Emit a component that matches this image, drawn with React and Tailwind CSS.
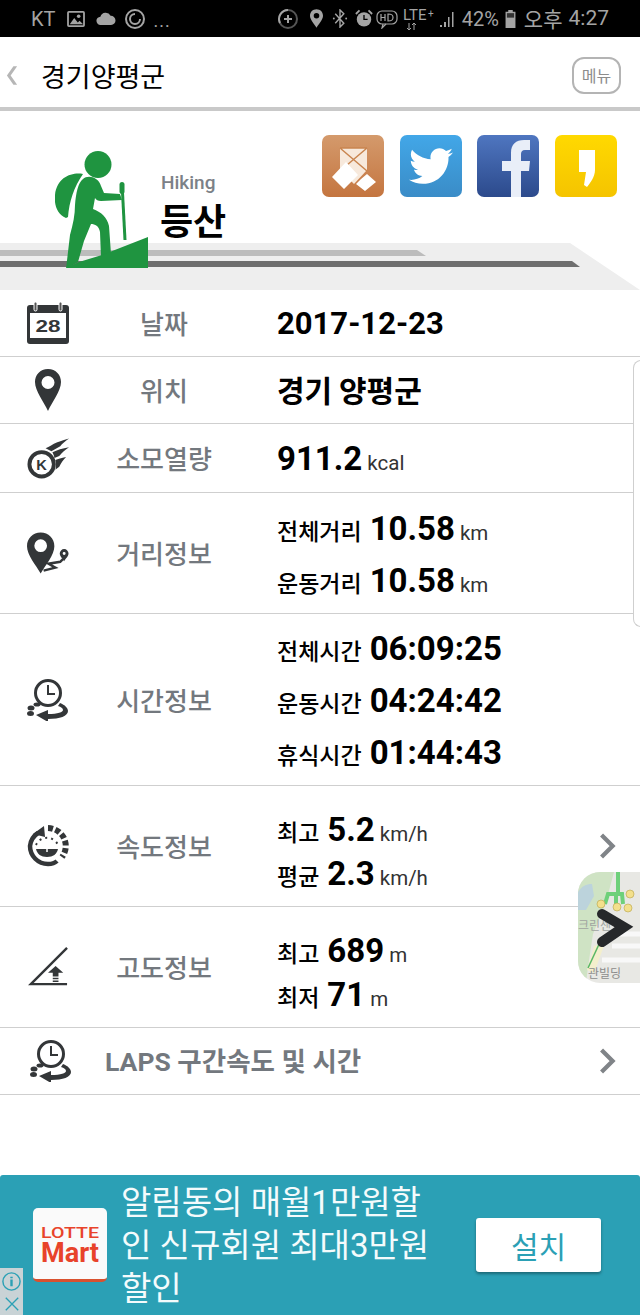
import { FaTwitter } from 'react-icons/fa'

const KR = { fontFamily: '"Noto Sans CJK KR", sans-serif' }
const RB = { fontFamily: 'Roboto, sans-serif' }

const CalendarIcon = () => (
  <svg viewBox="0 0 42 42" className="w-[42px] h-[42px]" fill="#333638">
    <rect x="0" y="3" width="42" height="39" rx="3" />
    <rect x="3" y="11" width="36" height="25" fill="#fff" />
    <rect x="7" y="0" width="3" height="9" rx="1.500" fill="#555" stroke="#fff" strokeWidth="1" />
    <rect x="32" y="0" width="3" height="9" rx="1.500" fill="#555" stroke="#fff" strokeWidth="1" />
    <text x="8.500" y="30" textLength="25" lengthAdjust="spacingAndGlyphs" fontFamily="Liberation Sans, sans-serif" fontWeight="700" fontSize="16">28</text>
  </svg>
)

const PinIcon = () => (
  <svg viewBox="0 0 28 42" className="w-[28px] h-[42px]">
    <path fillRule="evenodd" fill="#333638" d="M14 0C6 0 1 6 1 13c0 9 9 20 13 29 4-9 13-20 13-29C27 6 22 0 14 0zm0 7a6.500 6.500 0 1 1 0 13 6.500 6.500 0 0 1 0-13z" />
  </svg>
)

const FlameIcon = () => (
  <svg viewBox="0 0 44 42" className="w-[43px] h-[42px]" fill="#333638">
    <path fillRule="evenodd" d="M15 13a14.500 14.500 0 1 0 0 29 14.500 14.500 0 0 0 0-29zm0 4a10.500 10.500 0 1 1 0 21 10.500 10.500 0 0 1 0-21z" />
    <path d="M19 11c4-1 7-4 12-6 3-1 7-3 12-4-4 3-7 5-9 8l-9 5c-2-1-4-2-6-3z" />
    <path d="M26 15c5-2 10-4 17-5-4 3-7 5-10 9l-5 2c0-2-1-4-2-6z" />
    <path d="M29 23c3-1 6-2 11-3-3 3-5 6-7 10l-4 3c1-3 1-7 0-10z" />
    <text x="15" y="33" textAnchor="middle" fontFamily="Liberation Sans, sans-serif" fontWeight="700" fontSize="15">K</text>
  </svg>
)

const RouteIcon = () => (
  <svg viewBox="0 0 44 42" className="w-[43px] h-[42px]">
    <path fillRule="evenodd" fill="#333638" d="M14 0C6 0 0 6 0 14c0 9 9 19 14 28 5-9 14-19 14-28C28 6 22 0 14 0zm0 7a6.500 6.500 0 1 1 0 13 6.500 6.500 0 0 1 0-13z" />
    <path fill="none" stroke="#333638" strokeWidth="2.500" d="M17 39l12-3-7-4 12-2 3-3" />
    <path fillRule="evenodd" fill="#333638" d="M38 17a4.500 4.500 0 0 0-4.500 4.500c0 3 3 5 4.500 8 1.500-3 4.500-5 4.500-8A4.500 4.500 0 0 0 38 17zm0 3a1.500 1.500 0 1 1 0 3 1.500 1.500 0 0 1 0-3z" />
  </svg>
)

const ClockIcon = () => (
  <svg viewBox="0 0 42 42" className="w-[42px] h-[42px]">
    <circle cx="21" cy="14" r="12.500" fill="none" stroke="#333638" strokeWidth="3" />
    <path d="M21 6v9h7" fill="none" stroke="#333638" strokeWidth="2" />
    <path fill="#333638" d="M33 24c5 2 8 5 8 8 0 5-8 8-20 8v3L9 36l12-5v4c10 0 15-2 15-4 0-2-2-3-5-4z" />
    <ellipse cx="4" cy="29" rx="3.500" ry="2.500" fill="#333638" />
    <ellipse cx="3.500" cy="34.500" rx="3.500" ry="2.500" fill="#333638" />
    <ellipse cx="10" cy="25.500" rx="3.500" ry="2" fill="#333638" />
  </svg>
)

const SpeedIcon = () => (
  <svg viewBox="0 0 42 42" className="w-[42px] h-[42px]">
    <path fill="none" stroke="#333638" strokeWidth="4.500" d="M11 8A18 18 0 0 0 3 21a18 18 0 0 0 18 18c4 0 7-1 9-3" />
    <path fill="#333638" d="M6 9l11-8 1 11z" />
    <path fill="none" stroke="#333638" strokeWidth="6" strokeDasharray="5 2.500" d="M21 3a18 18 0 0 1 14 29" />
    <path fill="#333638" d="M9 24h22c-1 5-5 8-11 8S10 29 9 24z" />
    <path stroke="#333638" strokeWidth="2" strokeDasharray="2 4" fill="none" d="M9 20a12 12 0 0 1 22 0" />
    <path d="M20 17v10" stroke="#fff" strokeWidth="1.500" />
  </svg>
)

const SlopeIcon = () => (
  <svg viewBox="0 0 42 42" className="w-[40px] h-[40px]">
    <path fill="none" stroke="#333638" strokeWidth="2.500" d="M41 1L3 39h38" />
    <path fill="#333638" d="M29 20l8 7h-5v4h-6v-4h-5z" />
    <path stroke="#333638" strokeWidth="1.500" d="M26 33h6M26 36h6" />
  </svg>
)

const Chevron = () => (
  <svg viewBox="0 0 20 32" className="w-[17px] h-[28px]">
    <path d="M3 3l13 13L3 29" fill="none" stroke="#808488" strokeWidth="5" />
  </svg>
)

const Unit = ({ children }) => (
  <span className="text-[20.500px] leading-none font-normal text-[#333] ml-[5px]" style={RB}>{children}</span>
)

const Num = ({ children, size = 'text-[33px]' }) => (
  <span className={`${size} leading-none font-bold text-black`} style={RB}>{children}</span>
)

const Pair = ({ k, v, unit, gap = 'ml-[8px]' }) => (
  <div className="flex items-baseline">
    <span className="text-[23px] leading-none font-medium text-black" style={KR}>{k}</span>
    <span className={gap}><Num>{v}</Num></span>
    {unit && <Unit>{unit}</Unit>}
  </div>
)

const Row = ({ h, icon, label, arrow, children, stack }) => (
  <div className={`flex items-center border-b border-[#cfcfcf] ${h} relative`}>
    <div className="w-[96px] flex justify-center">{icon}</div>
    <div className="w-[136px] text-center text-[26px] leading-none font-medium text-[#73787e]" style={KR}>{label}</div>
    <div className={`ml-[45px] flex flex-col ${stack}`}>{children}</div>
    {arrow && <div className="ml-auto mr-[24px] flex"><Chevron /></div>}
  </div>
)

const StatusBar = () => (
  <div className="h-[37px] shrink-0 bg-black flex items-center pl-[31px] pr-[31px] text-[#a4a4a4]" style={RB}>
    <span className="text-[20px] leading-none">KT</span>
    <svg viewBox="0 0 20 18" className="w-[18px] h-[16px] ml-[12px]">
      <rect x="1" y="1" width="18" height="16" rx="1" fill="none" stroke="#a4a4a4" strokeWidth="2" />
      <path d="M3 15l5-7 4 5 2-2 4 4z" fill="#a4a4a4" />
      <circle cx="13" cy="6" r="2" fill="#a4a4a4" />
    </svg>
    <svg viewBox="0 0 22 14" className="w-[21px] h-[13px] ml-[10px]">
      <path d="M6 14a4.500 4.500 0 0 1-.5-9 6 6 0 0 1 11-1 5 5 0 0 1 .5 10z" fill="#a4a4a4" />
    </svg>
    <svg viewBox="0 0 22 22" className="w-[22px] h-[22px] ml-[8px]">
      <circle cx="11" cy="11" r="9" fill="none" stroke="#a4a4a4" strokeWidth="2" />
      <path d="M11 6a5 5 0 1 0 5 5" fill="none" stroke="#a4a4a4" strokeWidth="2" />
    </svg>
    <span className="text-[18px] leading-none ml-[7px] tracking-[1px] pt-[5px]">...</span>
    <div className="ml-auto flex items-center">
      <svg viewBox="0 0 22 22" className="w-[22px] h-[22px]">
        <circle cx="11" cy="11" r="9" fill="none" stroke="#555" strokeWidth="2" />
        <path d="M11 2a9 9 0 0 0-8 13" fill="none" stroke="#a4a4a4" strokeWidth="2" />
        <path d="M11 7v8M7 11h8" stroke="#a4a4a4" strokeWidth="2" />
      </svg>
      <svg viewBox="0 0 14 20" className="w-[13px] h-[19px] ml-[11px]">
        <path fillRule="evenodd" fill="#a4a4a4" d="M7 0C3 0 0 3 0 7c0 4 4 8 7 13 3-5 7-9 7-13 0-4-3-7-7-7zm0 4a3 3 0 1 1 0 6 3 3 0 0 1 0-6z" />
      </svg>
      <svg viewBox="0 0 16 20" className="w-[16px] h-[19px] ml-[9px]">
        <path d="M3 5l9 10-4 4V1l4 4-9 10" fill="none" stroke="#a4a4a4" strokeWidth="1.500" />
        <circle cx="1.500" cy="10" r="1" fill="#a4a4a4" /><circle cx="14.500" cy="10" r="1" fill="#a4a4a4" />
      </svg>
      <svg viewBox="0 0 20 20" className="w-[18px] h-[19px] ml-[7px]">
        <circle cx="10" cy="11" r="8" fill="#a4a4a4" />
        <path d="M10 6v5h4" fill="none" stroke="#000" strokeWidth="1.500" />
        <path d="M1 5l4-4M19 5l-4-4" stroke="#a4a4a4" strokeWidth="2" />
      </svg>
      <svg viewBox="0 0 22 20" className="w-[22px] h-[20px] ml-[3px]">
        <rect x="1" y="2" width="20" height="13" rx="5" fill="none" stroke="#a4a4a4" strokeWidth="1.200" />
        <path d="M5 5v7M9 5v7M5 8.500h4M12 5v7c4 0 5-1 5-3.500S16 5 12 5z" fill="none" stroke="#a4a4a4" strokeWidth="1.200" />
        <path d="M7 15l-1 4 4-4" fill="none" stroke="#a4a4a4" strokeWidth="1.200" />
      </svg>
      {/* LTE+ block is a drawn status glyph */}
      <svg viewBox="0 0 35 28" className="w-[35px] h-[28px] ml-[5px]" fill="#a4a4a4">
        <text x="0" y="15" fontSize="15" fontFamily="Roboto, sans-serif">LTE</text>
        <text x="25" y="12" fontSize="10" fontFamily="Roboto, sans-serif">+</text>
        <path d="M6 18v7M4 23l2 2 2-2M11 25v-7M9 20l2-2 2 2" fill="none" stroke="#a4a4a4" strokeWidth="1" />
      </svg>
      <svg viewBox="0 0 18 18" className="w-[18px] h-[18px]">
        <path d="M2 15h2v2H2zM6 12h2v5H6zM10 7h1.500v10H10zM14 2h1.500v15H14z" fill="#a4a4a4" />
      </svg>
      <span className="text-[20px] leading-none ml-[6px]">42%</span>
      <svg viewBox="0 0 11 20" className="w-[11px] h-[18px] ml-[6px]">
        <path d="M3 0h5v2h3v18H0V2h3z" fill="#a4a4a4" />
        <path d="M1.500 3.500h8v5h-8z" fill="#333" />
      </svg>
      <span className="text-[21px] leading-none ml-[8px]" style={KR}>오후</span>
      <span className="text-[21px] leading-none ml-[6px]">4:27</span>
    </div>
  </div>
)

const Hiker = () => (
  <svg viewBox="55 150 93 118" className="w-[93px] h-[118px] shrink-0 relative">
    <g fill="#1f9440">
      <circle cx="98" cy="164.500" r="13.500" />
      <path d="M83 174C72 172 57 177 55 195c-1 10 2 19 11 23l2-1c1-15 6-30 15-43z" />
      <path d="M75 205c1-12 3-22 8-26 3-3 9-3 13 0 3 2 4 4 5 7l3 7 16 1 2 6-21 1c-3 0-5-1-6-3l-2 11c8 3 14 8 16 17l2 28-10 3-1-25c-1-6-5-8-9-8l-7 17-6 21-12 7 4-34c3-11 5-20 5-30z" />
      <path d="M66 268l13-6 23-7 46-18v31z" />
    </g>
    <path d="M122 183l3 57" stroke="#1f9440" strokeWidth="3" fill="none" />
    <rect x="119.500" y="182" width="5" height="12" rx="2.500" fill="#1f9440" />
  </svg>
)

const Tile = ({ className, children }) => (
  <div className={`w-[62px] h-[62px] rounded-[7px] overflow-hidden flex items-center justify-center ${className}`}>{children}</div>
)

const Hero = () => (
  <div className="relative h-[179px] shrink-0 overflow-hidden flex pl-[55px]">
    <svg viewBox="0 0 640 47" className="absolute left-0 bottom-0 w-[640px] h-[47px]">
      <path d="M0 0h570l70 47H0z" fill="#eeeeee" />
      <path d="M0 7h417l9 6H0z" fill="#bcbcbc" />
      <path d="M0 18h572l8 6H0z" fill="#6e6e6e" />
    </svg>
    <div className="pt-[39px]"><Hiker /></div>
    <div className="relative pt-[59px] ml-[13px] flex flex-col">
      <span className="text-[19px] leading-[26px] font-medium text-[#7c8187]" style={RB}>Hiking</span>
      <span className="text-[36px] leading-[44px] font-bold text-black mt-[1px] -ml-[1px]" style={KR}>등산</span>
    </div>
    <div className="relative ml-auto mr-[23px] mt-[24px] flex gap-[15.670px] h-[62px]">
      <Tile className="bg-linear-to-b from-[#d49a6c] to-[#c4753f]">
        <svg viewBox="0 0 62 62" className="w-[62px] h-[62px]">
          <path d="M18 13h27v22l-13 14-14-14z" fill="#f7e9dc" />
          <path d="M18 13l27 23M45 13L18 36M18 13h27" stroke="#c98550" strokeWidth="1.500" fill="none" />
          <path d="M10 42l14-15 12 13-14 14zM39 44l6-5 9 8-11 9-9-7z" fill="#fff" />
        </svg>
      </Tile>
      <Tile className="bg-linear-to-b from-[#42a7e8] to-[#3a8cc7]">
        <FaTwitter className="text-white w-[44px] h-[44px]" />
      </Tile>
      <Tile className="bg-linear-to-b from-[#4f76c0] to-[#2c4a8c]">
        <svg viewBox="0 0 62 62" className="w-[62px] h-[62px]">
          <path d="M34 62V36h-9V26h9v-8c0-9 5-13 13-13h6v10h-5c-3 0-4 2-4 4v7h9l-1 10h-8v26z" fill="#e9eef8" />
        </svg>
      </Tile>
      <Tile className="bg-linear-to-b from-[#ffd900] to-[#f5c400]">
        <svg viewBox="0 0 62 62" className="w-[62px] h-[62px]">
          <path d="M24 15h16v20c0 7-5 13-8 17l-3-2 2-13h-7z" fill="#fff" />
        </svg>
      </Tile>
    </div>
  </div>
)

const LotteLogo = () => (
  <div className="w-[74px] h-[74px] shrink-0 bg-[#fafafa] rounded-[5px] border-b-[3px] border-[#d9512f] overflow-hidden">
    <svg viewBox="0 0 74 71" className="w-[74px] h-[71px]" fill="#e8432a" style={RB}>
      <text x="8" y="30" textLength="58" lengthAdjust="spacingAndGlyphs" fontSize="14" fontWeight="500">LOTTE</text>
      <text x="8" y="54" textLength="58" lengthAdjust="spacingAndGlyphs" fontSize="28" fontWeight="700">Mart</text>
    </svg>
  </div>
)

const AdBanner = () => (
  <div className="relative h-[140px] bg-[#2ba0b5] rounded-t-[3px] flex items-center pl-[33px]">
    <LotteLogo />
    <div className="w-[334px] shrink-0 ml-[14px] text-[33px] leading-[43px] text-[#f4fbfc]" style={{ fontFamily: 'Roboto, "Noto Sans CJK KR", sans-serif' }}>
      알림동의 매월1만원할<br />인 신규회원 최대3만원<br />할인
    </div>
    <div className="w-[125px] h-[54px] ml-[21px] bg-white rounded-[3px] shadow-[0_2px_3px_rgba(0,0,0,0.35)] flex items-center justify-center text-[30px] text-[#2ba0b5]" style={KR}>설치</div>
    {/* ad choices */}
    <div className="absolute left-0 bottom-0 w-[23px] h-[47px] bg-[#c9d3d6] flex flex-col items-center justify-between">
      <svg viewBox="0 0 22 22" className="w-[21px] h-[21px] mt-[3px]">
        <circle cx="11" cy="11" r="9" fill="none" stroke="#2ba0b5" strokeWidth="1.500" />
        <path d="M11 9v7M11 6v1.500" stroke="#2ba0b5" strokeWidth="2.500" />
      </svg>
      <svg viewBox="0 0 18 18" className="w-[16px] h-[16px] mb-[3px]">
        <path d="M2 2l14 14M16 2L2 16" stroke="#2ba0b5" strokeWidth="1.500" />
      </svg>
    </div>
  </div>
)

const MapThumb = () => (
  <div className="absolute left-[578px] top-[872px] w-[62px] h-[111px] rounded-l-[22px] overflow-hidden bg-[#e8e8e4]">
    <svg viewBox="0 0 62 111" className="w-[62px] h-[111px]">
      <path d="M0 0h36L28 30 15 62l-5 33-2 16H0z" fill="#cfe3c4" />
      <path d="M0 20c4-6 8-8 14-8l2 12-8 14H0z" fill="#bcd3dc" />
      <path d="M40 0v22M27 32l3-10h14l1 10M38 22v10" fill="none" stroke="#6ed07a" strokeWidth="4" />
      <path d="M16 74L9 98l7 3 11-30z" fill="#f3efcc" />
      <path d="M23 68L10 96" fill="none" stroke="#58b765" strokeWidth="1.500" />
      <path d="M32 62h30M34 74h28M24 88h38" stroke="#f8f8f8" strokeWidth="5" />
      <circle cx="23" cy="32" r="4" fill="#f3e08c" stroke="#b7a24a" strokeWidth=".6" />
      <circle cx="39" cy="35" r="4" fill="#f3e08c" stroke="#b7a24a" strokeWidth=".6" />
      <circle cx="50" cy="36" r="4" fill="#f3e08c" stroke="#b7a24a" strokeWidth=".6" />
      <circle cx="52" cy="22" r="4" fill="#f3e08c" stroke="#b7a24a" strokeWidth=".6" />
      <text x="0" y="58" fontSize="12" fill="#a0a4a0" fontFamily="Noto Sans CJK KR, sans-serif">크린센</text>
      <text x="10" y="106" fontSize="12" fill="#8c8c8c" fontFamily="Noto Sans CJK KR, sans-serif">관빌딩</text>
      <path d="M24 42l22 13-22 15" fill="none" stroke="#26282a" strokeWidth="10" strokeLinecap="round" />
    </svg>
  </div>
)

export default function App() {
  return (
    <div className="relative w-[640px] h-[1315px] bg-white overflow-hidden flex flex-col" style={KR}>
      <StatusBar />

      {/* Title bar */}
      <div className="h-[74px] shrink-0 pt-[6px] flex items-center border-b-[4px] border-[#c9c9c9]">
        <svg viewBox="0 0 14 22" className="w-[13px] h-[21px] ml-[6px]">
          <path d="M12 1L5 11l7 10H8L1 11 8 1z" fill="#b6b6b6" />
        </svg>
        <span className="ml-[22px] text-[27px] leading-none text-black" style={KR}>경기양평군</span>
        <div className="ml-auto mr-[19px] w-[49px] h-[37px] rounded-[12px] border-2 border-[#b4b4b4] flex items-center justify-center text-[16px] text-[#8c8c8c]">메뉴</div>
      </div>

      <Hero />

      <Row h="h-[67px]" icon={<CalendarIcon />} label="날짜">
        <Num size="text-[31px]">2017-12-23</Num>
      </Row>
      <Row h="h-[67px]" icon={<PinIcon />} label="위치">
        <span className="text-[30px] leading-none font-bold text-black pb-[2px]" style={KR}>경기 양평군</span>
      </Row>
      <Row h="h-[69px]" icon={<FlameIcon />} label="소모열량">
        <div className="flex items-baseline pt-[1px]"><Num>911.2</Num><Unit>kcal</Unit></div>
      </Row>
      <Row h="h-[121px]" icon={<RouteIcon />} label="거리정보" stack="gap-[19px] pt-[2px]">
        <Pair k="전체거리" v="10.58" unit="km" />
        <Pair k="운동거리" v="10.58" unit="km" />
      </Row>
      <Row h="h-[172px]" icon={<ClockIcon />} label="시간정보" stack="gap-[19px] pt-[2px]">
        <Pair k="전체시간" v="06:09:25" />
        <Pair k="운동시간" v="04:24:42" />
        <Pair k="휴식시간" v="01:44:43" />
      </Row>
      <Row h="h-[121px]" icon={<SpeedIcon />} label="속도정보" arrow stack="gap-[11px] pt-[10px]">
        <Pair k="최고" v="5.2" unit="km/h" />
        <Pair k="평균" v="2.3" unit="km/h" />
      </Row>
      <Row h="h-[121px]" icon={<SlopeIcon />} label="고도정보" stack="gap-[11px] pt-[10px]">
        <Pair k="최고" v="689" unit="m" />
        <Pair k="최저" v="71" unit="m" />
      </Row>
      <div className="h-[67px] shrink-0 flex items-center border-b border-[#cfcfcf]">
        <div className="ml-[30px] flex"><ClockIcon /></div>
        <span className="ml-[33px] pt-[3px] text-[26.500px] leading-none font-bold text-[#73787e]" style={{ fontFamily: 'Roboto, "Noto Sans CJK KR", sans-serif' }}>LAPS 구간속도 및 시간</span>
        <div className="ml-auto mr-[24px] flex"><Chevron /></div>
      </div>

      <div className="mt-auto"><AdBanner /></div>

      {/* side handle and map preview overlays */}
      <div className="absolute left-[633px] top-[360px] w-[8px] h-[267px] rounded-l-[8px] border border-[#cfcfcf] bg-white" />
      <MapThumb />
    </div>
  )
}
